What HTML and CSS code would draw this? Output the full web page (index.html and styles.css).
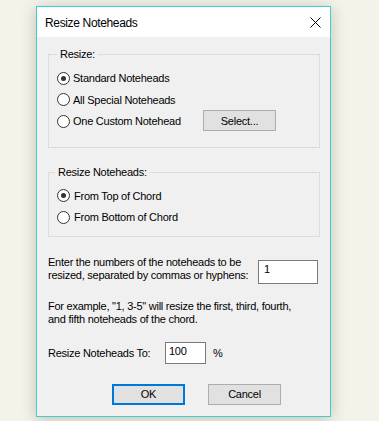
FILE: index.html
```html
<!DOCTYPE html>
<html>
<head>
<meta charset="utf-8">
<link rel="stylesheet" href="styles.css">
</head>
<body>
<div class="dialog">
  <div class="titlebar">
    <span class="title">Resize Noteheads</span>
    <svg class="close" width="11" height="11" viewBox="0 0 11 11"><path d="M0.5 0.5 L10.5 10.5 M10.5 0.5 L0.5 10.5" stroke="#000" stroke-width="1" fill="none"/></svg>
  </div>
  <div class="content">
    <fieldset class="group group-resize">
      <legend class="legend legend-resize">Resize:</legend>
      <div class="row"><span class="radio checked"></span><span class="label">Standard Noteheads</span></div>
      <div class="row"><span class="radio"></span><span class="label">All Special Noteheads</span></div>
      <div class="row"><span class="radio"></span><span class="label label-custom">One Custom Notehead</span><span class="btn btn-select">Select...</span></div>
    </fieldset>
    <fieldset class="group group-from">
      <legend class="legend legend-from">Resize Noteheads:</legend>
      <div class="row row-from"><span class="radio checked"></span><span class="label">From Top of Chord</span></div>
      <div class="row row-from"><span class="radio"></span><span class="label">From Bottom of Chord</span></div>
    </fieldset>
    <div class="enter">
      <p class="para">Enter the numbers of the noteheads to be<br>resized, separated by commas or hyphens:</p>
      <span class="input input-numbers">1</span>
    </div>
    <p class="para para-example">For example, "1, 3-5" will resize the first, third, fourth,<br>and fifth noteheads of the chord.</p>
    <div class="sizerow">
      <span class="size-label">Resize Noteheads To:</span>
      <span class="input input-size">100</span>
      <span class="pct">%</span>
    </div>
    <div class="buttons">
      <span class="btn btn-ok">OK</span>
      <span class="btn btn-cancel">Cancel</span>
    </div>
  </div>
</div>
</body>
</html>
```

FILE: styles.css
```css
html, body {
  margin: 0;
  padding: 0;
}
body {
  background: #f4f3ea;
  width: 379px;
  height: 421px;
  overflow: hidden;
  font-family: "Liberation Sans", Arial, sans-serif;
  font-size: 11px;
  color: #000;
  padding-top: 6px;
  box-sizing: border-box;
}
.dialog {
  margin-left: 36px;
  width: 295px;
  height: 411px;
  box-sizing: border-box;
  border: 1px solid #3bcfd0;
  background: #f0f0f0;
  box-shadow: 0 2px 14px rgba(60, 60, 40, 0.28);
  display: flex;
  flex-direction: column;
}
.titlebar {
  height: 30px;
  background: #fff;
  display: flex;
  align-items: center;
  justify-content: space-between;
  padding: 0 9px 0 8px;
}
.title {
  font-size: 12px;
  letter-spacing: -0.35px;
  margin-top: 1px;
}
.close {
  display: block;
  margin-top: 1px;
}
.content {
  flex: 1;
  padding: 0 10px 0 11px;
  display: flex;
  flex-direction: column;
  letter-spacing: -0.25px;
}
.group {
  margin: 0;
  padding: 0 0 0 8px;
  border: 1px solid #dcdcdc;
  min-width: 0;
}
.legend {
  line-height: 13px;
  padding: 0 3px;
}
.legend-resize {
  margin-left: 0;
}
.legend-from {
  margin-left: -2px;
}
.group-resize {
  margin-top: 10.5px;
  padding-top: 7px;
  padding-bottom: 14.5px;
}
.group-from {
  margin-top: 18px;
  padding-top: 6.5px;
  padding-bottom: 7.5px;
}
.row {
  height: 21.5px;
  display: flex;
  align-items: center;
}
.radio {
  width: 11px;
  height: 11px;
  border: 1px solid #333;
  border-radius: 50%;
  background: #fff;
  position: relative;
  flex: none;
  margin-right: 3px;
}
.row-from .radio {
  margin-right: 4px;
}
.radio.checked::after {
  content: "";
  position: absolute;
  left: 3px;
  top: 3px;
  width: 5px;
  height: 5px;
  border-radius: 50%;
  background: #333;
}
.label {
  white-space: nowrap;
}
.label-custom {
  width: 130px;
}
.btn {
  box-sizing: border-box;
  width: 73px;
  height: 21px;
  border: 1px solid #adadad;
  background: #e1e1e1;
  display: flex;
  align-items: center;
  justify-content: center;
  font-size: 11px;
}
.btn-select {
  margin-top: -1px;
}
.enter {
  margin-top: 19px;
  display: flex;
  align-items: flex-start;
  justify-content: space-between;
}
.para {
  margin: 0;
  line-height: 13.5px;
  white-space: nowrap;
}
.input {
  box-sizing: border-box;
  background: #fff;
  border: 1px solid #7a7a7a;
  padding: 2px 0 0 5px;
  line-height: 13px;
}
.input-numbers {
  width: 60px;
  height: 24px;
  margin-top: 4px;
  margin-right: 2px;
}
.para-example {
  margin-top: 16px;
}
.sizerow {
  margin-top: 15px;
  display: flex;
  align-items: center;
  height: 22px;
}
.size-label {
  width: 117px;
  flex: none;
  white-space: nowrap;
}
.input-size {
  width: 41px;
  height: 22px;
  padding-left: 3px;
}
.pct {
  margin-left: 7px;
}
.buttons {
  margin-top: 20px;
  display: flex;
  gap: 23px;
  padding-left: 64px;
}
.btn-ok {
  border: 2px solid #0078d7;
}
```
